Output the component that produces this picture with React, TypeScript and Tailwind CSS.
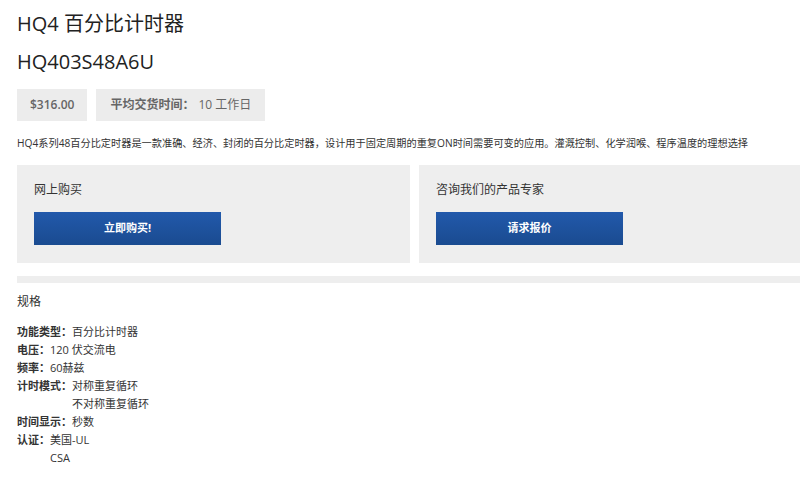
const font = {
  fontFamily: '"Open Sans", "Noto Sans CJK SC", sans-serif',
};

const specs: { label: string; values: string[] }[] = [
  { label: "功能类型：", values: ["百分比计时器"] },
  { label: "电压：", values: ["120 伏交流电"] },
  { label: "频率：", values: ["60赫兹"] },
  { label: "计时模式：", values: ["对称重复循环", "不对称重复循环"] },
  { label: "时间显示：", values: ["秒数"] },
  { label: "认证：", values: ["美国-UL", "CSA"] },
];

function ActionPanel({ title, action }: { title: string; action: string }) {
  return (
    <div className="h-[98px] bg-[#eeeeee] pl-[17px] pt-[17px]">
      <p className="text-[12px] leading-[16px] text-[#333]">{title}</p>
      <button className="mt-[14px] flex h-[33px] w-[187px] items-center justify-center bg-[linear-gradient(180deg,#2259ab,#1a4b90)] text-[11px] font-bold text-white">
        {action}
      </button>
    </div>
  );
}

export default function App() {
  return (
    <div className="h-[483px] w-[800px] overflow-hidden bg-white pl-[17px] text-[#333]" style={font}>
      <h1 className="pt-[10px] text-[20px] leading-[28px] text-[#222]">HQ4 百分比计时器</h1>
      <h2 className="mt-[10px] text-[20px] leading-[28px] text-[#222]">HQ403S48A6U</h2>

      <div className="mt-[13px] flex gap-[9px] text-[12px] text-[#666]">
        <span className="flex h-[32px] items-center bg-[#ececec] px-[13px] font-semibold">$316.00</span>
        <span className="flex h-[32px] items-center bg-[#ececec] px-[14px]">
          <b className="font-bold">平均交货时间：</b>
          <span className="ml-[4px]">10 工作日</span>
        </span>
      </div>

      <p className="mt-[15px] whitespace-nowrap text-[10.2px] leading-[14px] text-[#333]">
        HQ4系列48百分比定时器是一款准确、经济、封闭的百分比定时器，设计用于固定周期的重复ON时间需要可变的应用。灌溉控制、化学润喉、程序温度的理想选择
      </p>

      <div className="mt-[15px] grid w-[795px] grid-cols-[393px_393px] gap-[9px]">
        <ActionPanel title="网上购买" action="立即购买!" />
        <ActionPanel title="咨询我们的产品专家" action="请求报价" />
      </div>

      <div className="mt-[13px] h-[7px] w-[800px] bg-[#eeeeee]" />

      <h3 className="mt-[11px] text-[12px] leading-[16px] text-[#333]">规格</h3>

      <dl className="mt-[13px] text-[11px] leading-[18px] text-[#333]">
        {specs.map((s) => (
          <div key={s.label} className="flex">
            <dt className="font-bold">{s.label}</dt>
            <dd>
              {s.values.map((v) => (
                <div key={v}>{v}</div>
              ))}
            </dd>
          </div>
        ))}
      </dl>
    </div>
  );
}
